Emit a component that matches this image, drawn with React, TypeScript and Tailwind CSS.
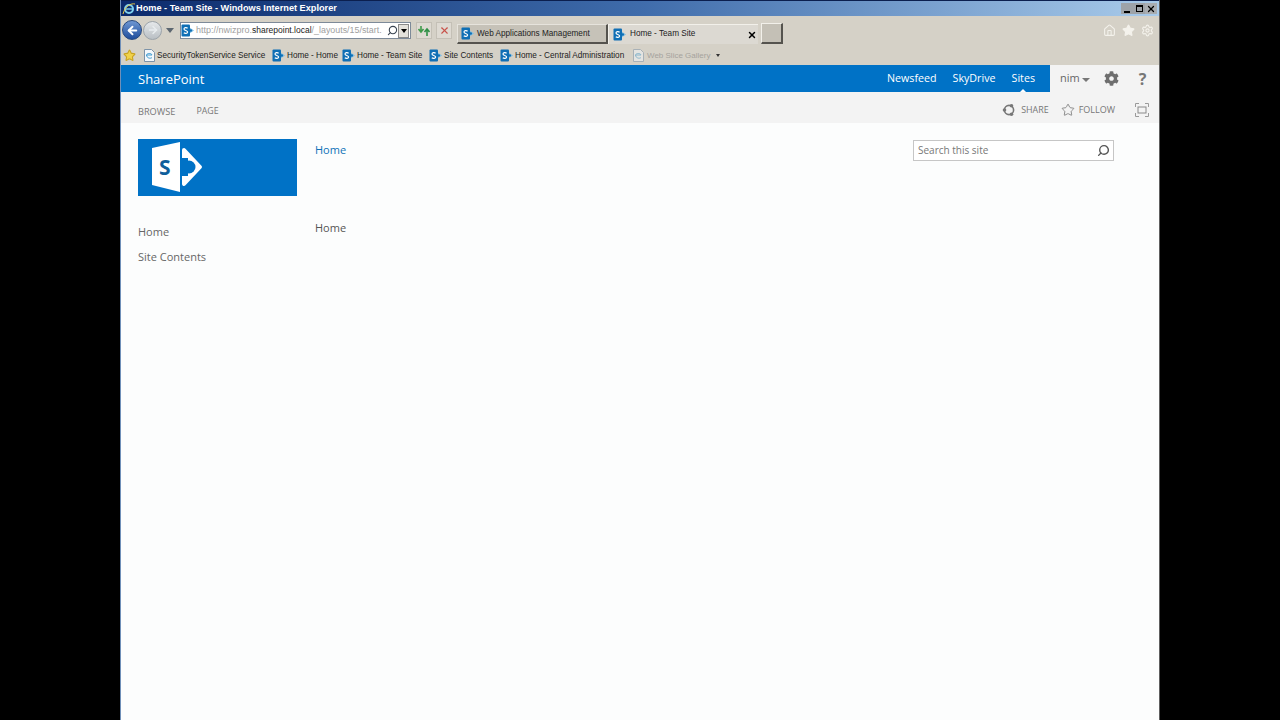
import { ArrowLeft, ArrowRight, Search, Star, Home, Settings, X } from "lucide-react"
import { FaCog } from "react-icons/fa"

const chromeFont = "font-['Liberation_Sans',sans-serif]"
const spFont = "font-['Open_Sans',sans-serif]"

function SpIcon() {
  return (
    <svg width="13" height="13" viewBox="0 0 13 13" className="shrink-0">
      <path d="M7 2.5 L13 6.5 L7 10.5 Z" fill="#7dbce2" />
      <rect x="0.5" y="0.5" width="8.5" height="12" fill="#0f6fb5" rx="1" />
      <circle cx="9.8" cy="6.5" r="1.2" fill="#0f6fb5" />
      <path d="M6.6 4.2 C5.4 3.2 3 3.5 3 5 C3 6.8 6.6 6.2 6.6 8 C6.6 9.5 4 9.7 2.8 8.7" fill="none" stroke="#fff" strokeWidth="1.2" />
    </svg>
  )
}

function PageIcon({ faded }: { faded?: boolean }) {
  return (
    <svg width="11" height="13" viewBox="0 0 11 13" className={faded ? "shrink-0 opacity-50" : "shrink-0"}>
      <path d="M0.5 0.5 H7.5 L10.5 3.5 V12.5 H0.5 Z" fill="#f4f8fb" stroke="#7d93a8" />
      <path d="M2.5 6 C3 4 7.5 4 8 6 H2.5 C2.5 9 6.5 10 8 8.5" fill="none" stroke="#3f9bd0" />
    </svg>
  )
}

function FavItem({ label, className }: { label: string; className: string }) {
  return (
    <div className={`flex items-center gap-[2px] ${className}`}>
      <SpIcon />
      <span className="text-[8.2px] pt-[2px] text-[#1c1c1c] whitespace-nowrap">{label}</span>
    </div>
  )
}

function SpLogo() {
  return (
    <svg width="70" height="57" viewBox="0 0 70 57">
      <path d="M46 11 L62 28 L46 45 Z" fill="#fff" stroke="#fff" strokeWidth="4" strokeLinejoin="round" />
      <rect x="42" y="19" width="8" height="18" fill="#0072c6" />
      <circle cx="51" cy="28" r="6.5" fill="#0072c6" />
      <path d="M14 9 L42 3 V53 L14 46 Z" fill="#ffffff" />
      <text x="21" y="36" fontFamily="Open Sans, sans-serif" fontWeight="700" fontSize="21" fill="#0f5f9c">S</text>
    </svg>
  )
}

export default function App() {
  return (
    <div className="w-[1280px] h-[720px] bg-black flex justify-center overflow-hidden">
      <div className="w-[1040px] h-full flex flex-col border-l border-r border-l-[#6f8fb8] border-r-[#5f5f5f] bg-[#fcfdfd]">
        {/* title bar */}
        <div className={`h-[16px] shrink-0 flex items-center pl-[1px] pr-[2px] border-t border-t-[#0b1f4f] bg-gradient-to-r from-[#0c2a6c] via-[#3f6cab] to-[#a9cbea] ${chromeFont}`}>
          <svg width="14" height="14" viewBox="0 0 14 14" className="shrink-0">
            <circle cx="7" cy="7" r="4" fill="none" stroke="#7fd0ee" strokeWidth="2" />
            <path d="M3 7 H11" stroke="#7fd0ee" strokeWidth="1.4" />
            <path d="M1 12 C3 4 9 1 13 2" fill="none" stroke="#e6c545" strokeWidth="1" />
          </svg>
          <span className="pt-[1px] text-[9.2px] font-bold text-white whitespace-nowrap">
            Home - Team Site - Windows Internet Explorer
          </span>
          <div className="ml-auto flex h-[11px]">
            <div className="w-[12px] bg-[#9ea3a8] flex items-end justify-center pb-[1px]">
              <div className="w-[6px] h-[2px] bg-black" />
            </div>
            <div className="w-[12px] bg-[#9ea3a8] flex items-center justify-center">
              <div className="w-[7px] h-[7px] border border-t-2 border-black" />
            </div>
            <div className="w-[12px] bg-[#a9adb1] flex items-center justify-center">
              <X size={10} strokeWidth={3} color="#000" />
            </div>
          </div>
        </div>

        {/* browser chrome */}
        <div className={`h-[49px] shrink-0 bg-[#d5d1c7] flex flex-col ${chromeFont}`}>
          <div className="h-[30px] flex items-start">
            {/* back and forward */}
            <div className="w-[59px] shrink-0 flex items-center pl-[1px] pt-[4px]">
              <div className="w-[20px] h-[20px] rounded-full bg-gradient-to-b from-[#6f97d2] to-[#1f4d9c] border border-[#28497f] flex items-center justify-center">
                <ArrowLeft size={13} color="#fff" strokeWidth={3.5} />
              </div>
              <div className="ml-[1px] w-[19px] h-[19px] rounded-full bg-gradient-to-b from-[#e5e8ea] to-[#b9bfc4] border border-[#9ba3aa] flex items-center justify-center">
                <ArrowRight size={12} color="#e8ecef" strokeWidth={3} />
              </div>
              <div className="ml-[4px] w-0 h-0 border-l-[4px] border-r-[4px] border-t-[5px] border-l-transparent border-r-transparent border-t-[#5c6670]" />
            </div>
            {/* address */}
            <div className="w-[231px] h-[17px] mt-[6px] shrink-0 bg-white border border-[#7d8a99] flex items-center">
              <SpIcon />
              <span className="ml-[2px] text-[9px] text-[#a0a0a0] whitespace-nowrap">http://nwizpro.</span>
              <span className="text-[8.5px] text-[#222] whitespace-nowrap">sharepoint.local</span>
              <span className="text-[8.9px] text-[#a0a0a0] whitespace-nowrap">/_layouts/15/start.</span>
              <Search size={11} color="#3a4552" strokeWidth={2.4} className="ml-auto shrink-0 -scale-x-100" />
              <div className="w-[11px] h-[14px] mr-[1px] bg-[#e4e2dc] border border-[#8a8a8a] flex items-center justify-center">
                <div className="w-0 h-0 border-l-[3px] border-r-[3px] border-t-[4px] border-l-transparent border-r-transparent border-t-black" />
              </div>
            </div>
            {/* refresh, stop */}
            <div className="ml-[5px] mt-[6px] w-[16px] h-[17px] shrink-0 bg-[#dedad2] border border-[#c4c0b6] flex items-center justify-center">
              <svg width="12" height="10" viewBox="0 0 12 10">
                <path d="M3 0 V5 M0.5 3 L3 6 L5.5 3" fill="none" stroke="#3f9a4a" strokeWidth="1.6" />
                <path d="M9 10 V4 M6.5 6 L9 3 L11.5 6" fill="none" stroke="#2f8f46" strokeWidth="1.6" />
              </svg>
            </div>
            <div className="ml-[4px] mt-[6px] w-[16px] h-[17px] shrink-0 bg-[#dedad2] border border-[#c4c0b6] flex items-center justify-center">
              <X size={11} color="#c8524a" strokeWidth={2.4} />
            </div>
            {/* tabs */}
            <div className="ml-[5px] mt-[8px] w-[151px] h-[20px] shrink-0 bg-[#c6c2b8] border-b-2 border-r-2 border-[#55534e] border-l border-t-[#e6e3dc] border-t border-l-[#e6e3dc] flex items-center pl-[3px] gap-[3px]">
              <SpIcon />
              <span className="pt-[2px] text-[8.2px] text-[#222] whitespace-nowrap">Web Applications Management</span>
            </div>
            <div className="mt-[8px] w-[150px] h-[20px] shrink-0 bg-[#dcd9d2] border-t border-l border-[#f2f0ea] flex items-center pl-[4px] gap-[4px]">
              <SpIcon />
              <span className="text-[8.2px] text-[#222] whitespace-nowrap">Home - Team Site</span>
              <X size={10} strokeWidth={3.5} color="#000" className="ml-auto mr-[1px]" />
            </div>
            <div className="ml-[3px] mt-[7px] w-[22px] h-[21px] shrink-0 bg-[#c4c0b6] border-t border-l border-[#f2f0ea] border-r-2 border-b-2 border-r-[#55534e] border-b-[#55534e]" />
            <div className="ml-auto mt-[8px] mr-[5px] flex items-center gap-[6px]">
              <Home size={13} color="#f4f2ec" strokeWidth={2} />
              <Star size={13} color="#f4f2ec" fill="#f4f2ec" />
              <Settings size={13} color="#f4f2ec" strokeWidth={2} />
            </div>
          </div>
          {/* favorites */}
          <div className="h-[19px] flex items-center pl-[2px]">
            <Star size={13} color="#c9a21f" fill="#f0d24a" className="shrink-0" />
            <div className="ml-[8px] flex items-center gap-[2px] w-[126px]">
              <PageIcon />
              <span className="pt-[2px] text-[8.2px] text-[#1c1c1c] whitespace-nowrap">SecurityTokenService Service</span>
            </div>
            <FavItem label="Home - Home" className="w-[70px] ml-[2px]" />
            <FavItem label="Home - Team Site" className="w-[87px]" />
            <FavItem label="Site Contents" className="w-[71px]" />
            <FavItem label="Home - Central Administration" className="w-[133px]" />
            <div className="flex items-center gap-[3px]">
              <PageIcon faded />
              <span className="text-[8px] text-[#a5a39d] whitespace-nowrap">Web Slice Gallery</span>
              <div className="ml-[3px] w-0 h-0 border-l-[2.5px] border-r-[2.5px] border-t-[3px] border-l-transparent border-r-transparent border-t-[#333]" />
            </div>
          </div>
        </div>

        {/* suite bar */}
        <div className={`h-[27px] shrink-0 flex ${spFont}`}>
          <div className="flex-1 bg-[#0072c6] flex items-center pl-[17px] pr-[15px]">
            <span className="pt-[2px] text-[13px] text-white">SharePoint</span>
            <div className="ml-auto flex items-center gap-[16px] text-[10.7px] text-white">
              <span>Newsfeed</span>
              <span>SkyDrive</span>
              <span className="relative">
                Sites
                <span className="absolute left-1/2 -translate-x-1/2 bottom-[-5px] w-0 h-0 border-l-[3px] border-r-[3px] border-b-[3px] border-l-transparent border-r-transparent border-b-white" />
              </span>
            </div>
          </div>
          <div className="w-[109px] bg-[#f3f3f3] flex items-center pl-[10px] text-[#666]">
            <span className="text-[11px]">nim</span>
            <div className="ml-[2px] mt-[2px] w-0 h-0 border-l-[4px] border-r-[4px] border-t-[4px] border-l-transparent border-r-transparent border-t-[#777]" />
            <FaCog size={15} color="#6e6e6e" className="ml-[14px]" />
            <span className="ml-[20px] text-[16px] font-bold text-[#777]">?</span>
          </div>
        </div>

        {/* ribbon */}
        <div className={`h-[31px] shrink-0 bg-[#f3f3f3] flex items-center pt-[5px] pl-[17px] pr-[10px] text-[#777] ${spFont}`}>
          <span className="text-[9.2px] pt-[3px]">BROWSE</span>
          <span className="ml-[21px] text-[8.8px] pt-[3px]">PAGE</span>
          <div className="ml-auto flex items-center -mt-[1px]">
            <svg width="14" height="14" viewBox="0 0 14 14" className="mr-[5px]">
              <circle cx="7" cy="7" r="4.6" fill="none" stroke="#777" strokeWidth="1.6" />
              <circle cx="2.5" cy="7" r="1.8" fill="#777" />
              <circle cx="9.5" cy="2.7" r="1.8" fill="#777" />
              <circle cx="9.5" cy="11.3" r="1.8" fill="#777" />
            </svg>
            <span className="text-[8.9px]">SHARE</span>
            <Star size={14} color="#777" strokeWidth={1.4} className="ml-[12px] mr-[4px]" />
            <span className="text-[9px]">FOLLOW</span>
            <svg width="14" height="14" viewBox="0 0 14 14" className="ml-[20px]">
              <rect x="3" y="4" width="8" height="6" fill="none" stroke="#8a8a8a" />
              <path d="M0.5 4 V0.5 H4 M10 0.5 H13.5 V4 M13.5 10 V13.5 H10 M4 13.5 H0.5 V10" fill="none" stroke="#9a9a9a" />
            </svg>
          </div>
        </div>

        {/* page body */}
        <div className={`flex-1 flex ${spFont}`}>
          <div className="w-[194px] shrink-0 pl-[17px] pt-[16px]">
            <div className="w-[159px] h-[57px] bg-[#0072c6]">
              <SpLogo />
            </div>
            <div className="mt-[27px] text-[11px] text-[#666] flex flex-col gap-[7px]">
              <span className="leading-[18px]">Home</span>
              <span className="leading-[18px]">Site Contents</span>
            </div>
          </div>
          <div className="flex-1 pt-[18px]">
            <div className="flex items-start">
              <span className="text-[11px] leading-[17px] text-[#0f72b8]">Home</span>
              <div className="ml-auto mr-[45px] w-[201px] h-[21px] -mt-[1px] bg-white border border-[#c6c6c6] flex items-center pl-[4px] pr-[3px]">
                <span className="text-[10px] text-[#777]">Search this site</span>
                <Search size={13} color="#555" strokeWidth={2.6} className="ml-auto -scale-x-100" />
              </div>
            </div>
            <div className="mt-[58px] text-[11px] leading-[17px] text-[#555]">Home</div>
          </div>
        </div>
      </div>
    </div>
  )
}
